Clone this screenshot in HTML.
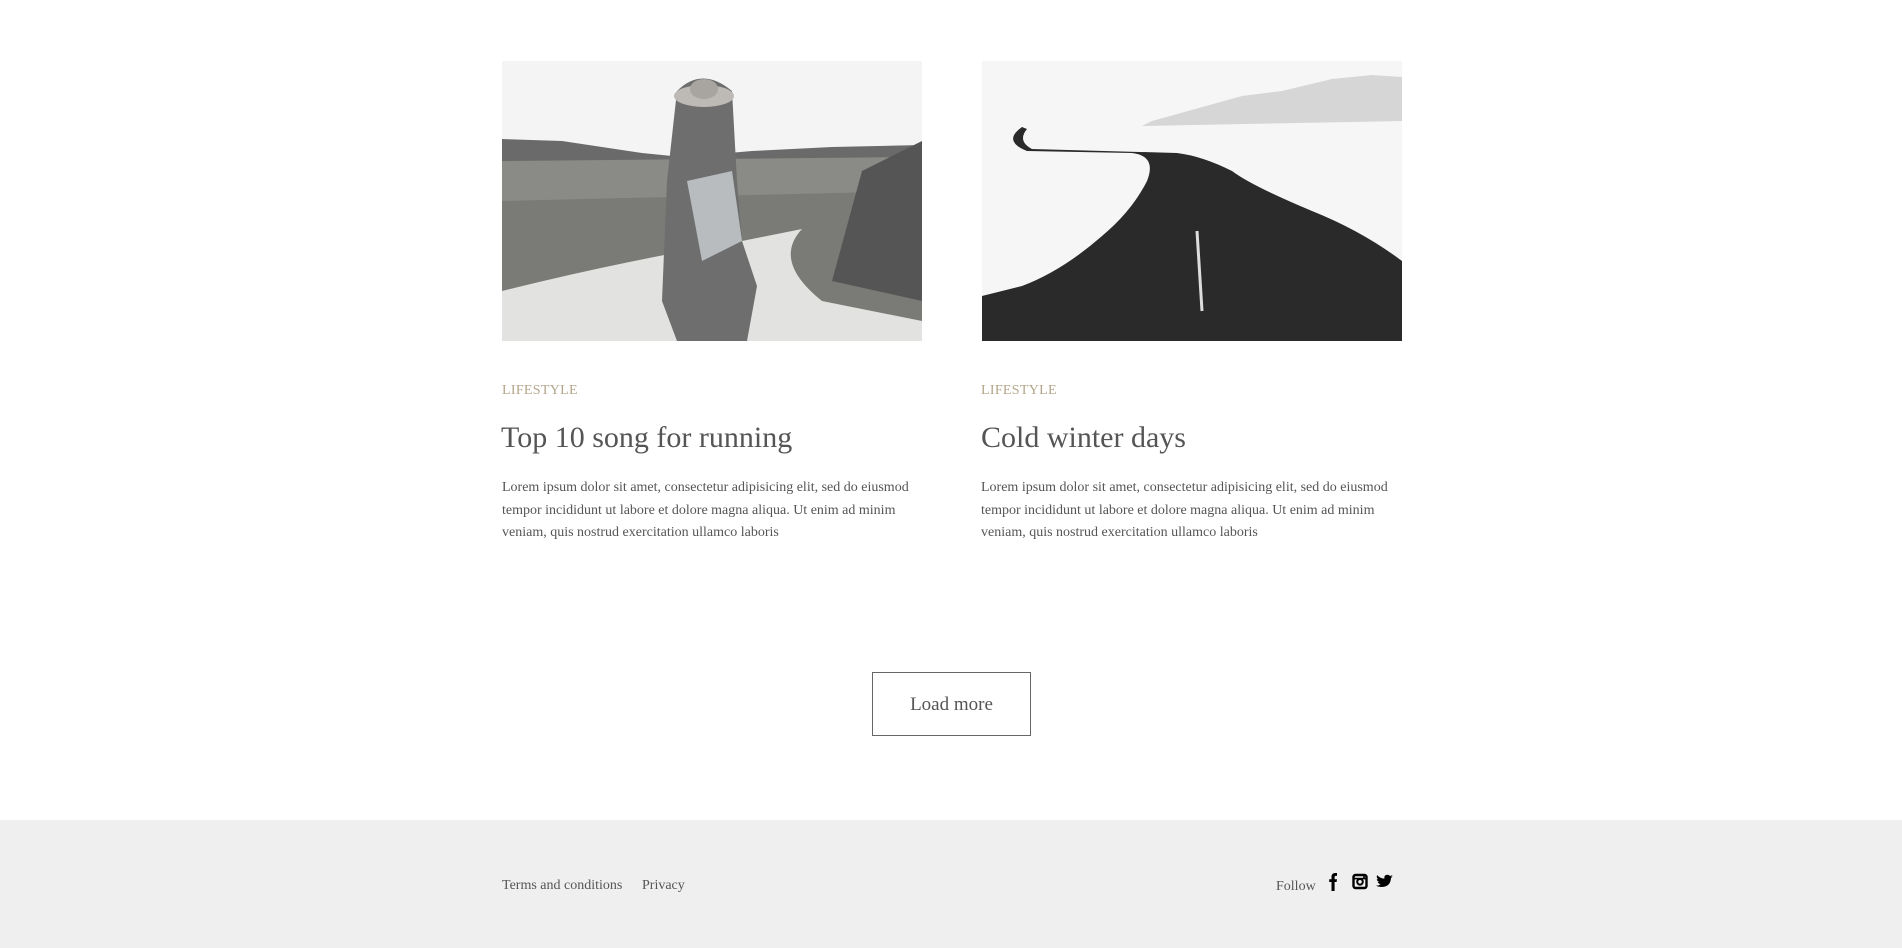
<!DOCTYPE html>
<html><head><meta charset="utf-8"><style>
*{margin:0;padding:0;box-sizing:border-box}
body{width:1902px;height:948px;background:#fff;font-family:"Liberation Serif",serif;position:relative;overflow:hidden}
.img{position:absolute;top:61px;width:420px;height:280px;overflow:hidden}
.cat{position:absolute;top:383px;font-size:14px;color:#b3a58a;letter-spacing:0.3px}
.ttl{position:absolute;top:421px;font-size:30px;color:#555;white-space:nowrap}
.body{position:absolute;top:477px;width:430px;font-size:14px;line-height:22.6px;color:#555}
.btn{position:absolute;left:872px;top:672px;width:159px;height:64px;border:1px solid #666;font-size:19px;color:#555;text-align:center;line-height:64px}
.foot{position:absolute;left:0;top:820px;width:1902px;height:128px;background:#efefef}
.fl{position:absolute;top:878px;font-size:14px;color:#555}
</style></head><body>
<div class="img" style="left:502px">
<svg width="420" height="280" viewBox="0 0 420 280">
<rect width="420" height="280" fill="#f4f4f4"/>
<path d="M0 78 L60 80 L140 92 L180 96 L250 90 L330 86 L420 84 L420 280 L0 280Z" fill="#6a6a6a"/>
<path d="M0 100 L420 96 L420 280 L0 280Z" fill="#8a8a86"/>
<path d="M0 140 L420 130 L420 280 L0 280Z" fill="#7a7a76"/>
<path d="M0 230 Q120 200 240 180 L300 168 Q270 200 320 240 L420 260 L420 280 L0 280Z" fill="#e2e2e0"/>
<path d="M360 110 L420 80 L420 240 L330 220Z" fill="#555"/>
<path d="M175 30 Q200 5 230 30 L235 120 L240 180 L255 225 L245 280 L175 280 L160 240 L165 120Z" fill="#6e6e6e"/>
<path d="M185 120 L230 110 L240 180 L200 200Z" fill="#b8bcbe"/>
<ellipse cx="202" cy="35" rx="30" ry="11" fill="#bdb9b4"/>
<ellipse cx="202" cy="28" rx="14" ry="10" fill="#a8a4a0"/>
</svg></div>
<div class="img" style="left:982px">
<svg width="420" height="280" viewBox="0 0 420 280">
<rect width="420" height="280" fill="#f6f6f6"/>
<path d="M170 60 L260 35 L300 30 L350 18 L390 14 L420 16 L420 60 L160 65Z" fill="#d6d6d6"/>
<path d="M40 66 Q20 80 45 90 L150 92 Q175 95 165 120 Q150 150 120 175 Q80 210 40 225 L0 235 L0 280 L420 280 L420 200 Q380 170 330 150 Q270 125 250 110 Q220 95 195 92 L50 88 Q35 80 45 68Z" fill="#2a2a2a"/>
<path d="M215 170 L220 250" stroke="#ddd" stroke-width="3"/>
</svg></div>
<div class="cat" style="left:502px">LIFESTYLE</div>
<div class="cat" style="left:981px">LIFESTYLE</div>
<div class="ttl" style="left:501px">Top 10 song for running</div>
<div class="ttl" style="left:981px">Cold winter days</div>
<div class="body" style="left:502px">Lorem ipsum dolor sit amet, consectetur adipisicing elit, sed do eiusmod tempor incididunt ut labore et dolore magna aliqua. Ut enim ad minim veniam, quis nostrud exercitation ullamco laboris</div>
<div class="body" style="left:981px">Lorem ipsum dolor sit amet, consectetur adipisicing elit, sed do eiusmod tempor incididunt ut labore et dolore magna aliqua. Ut enim ad minim veniam, quis nostrud exercitation ullamco laboris</div>
<div class="btn">Load more</div>
<div class="foot"></div>
<div class="fl" style="left:502px">Terms and conditions</div>
<div class="fl" style="left:642px">Privacy</div>
<div class="fl" style="left:1276px;top:879px">Follow</div>
<svg style="position:absolute;left:1326px;top:872px" width="70" height="20" viewBox="0 0 70 20">
<path d="M5.5 19 V10 H3.2 V7.2 H5.5 V5 Q5.5 1 9.3 1 H11 V3.9 H9.6 Q8.6 3.9 8.6 5.1 V7.2 H11 L10.6 10 H8.6 V19Z" fill="#000"/>
<rect x="27.5" y="3" width="13" height="13" rx="2" fill="none" stroke="#000" stroke-width="2.4"/>
<circle cx="34" cy="9.8" r="2.8" fill="none" stroke="#000" stroke-width="2"/>
<rect x="27" y="5.8" width="14" height="1.6" fill="#000"/>
<circle cx="38" cy="5" r="1" fill="#000"/>
<path d="M67 4.5 Q65.8 5.1 64.7 5.3 Q66 4.4 66.5 3 Q65.2 3.7 64 4 Q62.9 2.8 61.3 2.8 Q58.3 2.8 58.3 5.9 L58.4 6.6 Q54 6.4 51.2 3.1 Q50 5.5 52.2 7.3 Q51.4 7.3 50.8 7 Q50.9 9.3 53.2 9.9 Q52.5 10.1 51.8 10 Q52.5 12 54.7 12.1 Q52.5 13.9 49.8 13.6 Q52.1 15 55 15 Q64.5 15 65 6Z" fill="#000"/>
</svg>
</body></html>
